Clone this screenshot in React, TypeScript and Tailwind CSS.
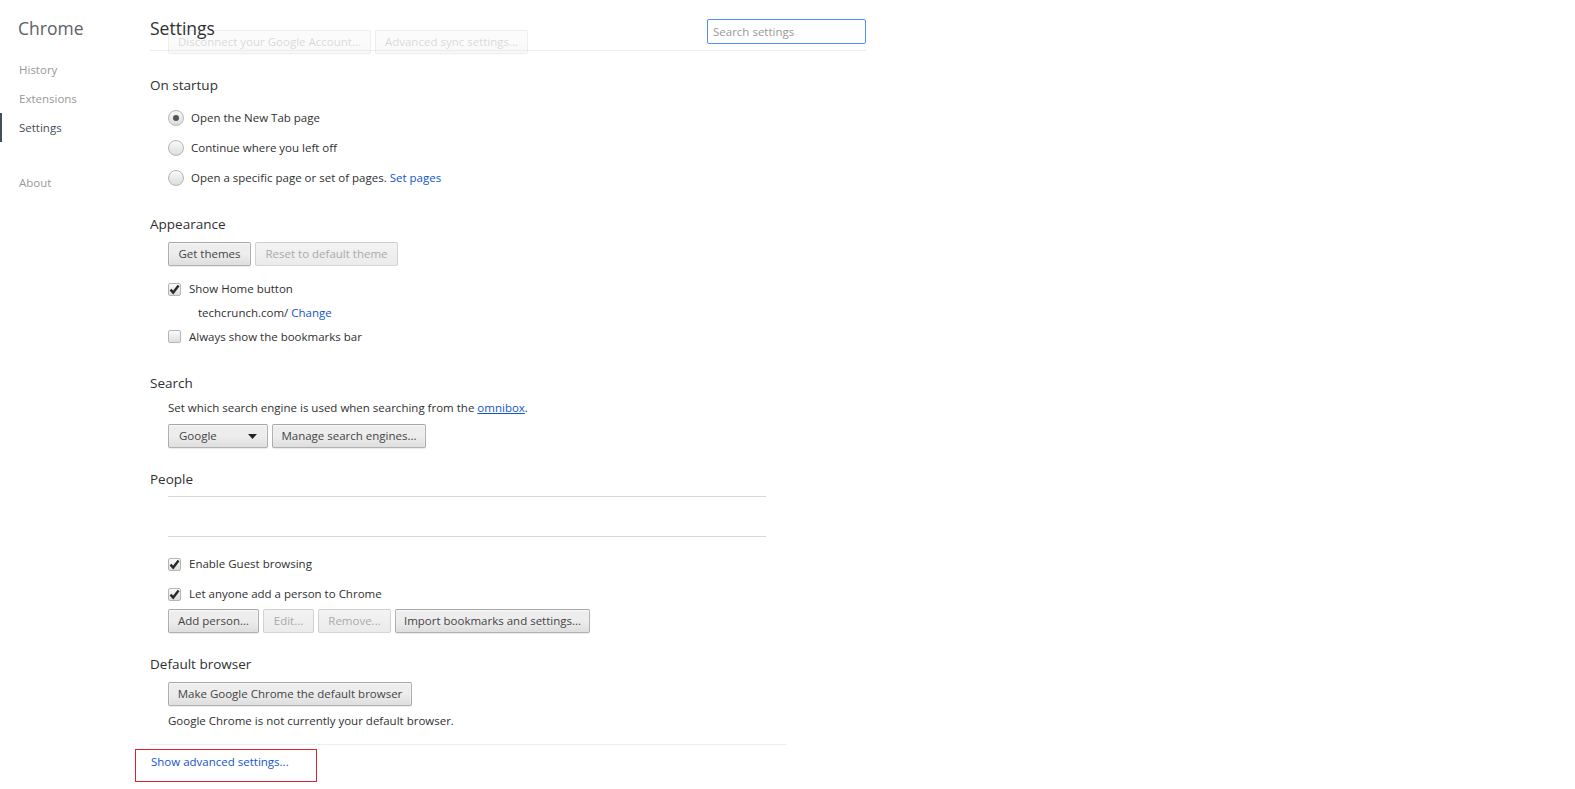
import React from "react";

const btn =
  "h-[24px] rounded-[2px] border border-[rgba(0,0,0,0.25)] bg-gradient-to-b from-[#ededed] via-[#ededed] to-[#dedede] shadow-[0_1px_0_rgba(0,0,0,0.08),inset_0_1px_2px_rgba(255,255,255,0.75)] text-[11.5px] text-[#444] text-center leading-[22px]";
const btnOff =
  "h-[24px] rounded-[2px] border border-[rgba(0,0,0,0.12)] bg-gradient-to-b from-[#f3f3f3] to-[#ebebeb] text-[11.5px] text-[#aaa] text-center leading-[22px]";

function Radio({ on }: { on?: boolean }) {
  return (
    <span className="w-[16px] h-[16px] rounded-full border border-[#b5b5b5] bg-gradient-to-b from-[#fafafa] to-[#dcdcdc] flex items-center justify-center shrink-0">
      {on && <span className="w-[6px] h-[6px] rounded-full bg-[#555]" />}
    </span>
  );
}

function Check({ on }: { on?: boolean }) {
  return (
    <span className="w-[13px] h-[13px] rounded-[2px] border border-[#b5b5b5] bg-gradient-to-b from-[#fafafa] to-[#dedede] flex items-center justify-center shrink-0">
      {on && (
        <svg width="11" height="11" viewBox="0 0 11 11">
          <path d="M1.5 5.6 L4.2 8.6 L9.6 1.6" fill="none" stroke="#2a2a2a" strokeWidth="2.4" />
        </svg>
      )}
    </span>
  );
}

function H3({ children }: { children: React.ReactNode }) {
  return <div className="h-[20px] leading-[20px] text-[13.5px] text-[#303030]">{children}</div>;
}

export default function App() {
  return (
    <div className="flex bg-white min-h-[789px] font-['Open_Sans',sans-serif] text-[11.5px] text-[#303030]">
      {/* sidebar */}
      <div className="w-[149px] shrink-0">
        <div className="pl-[18px] pt-[16px] h-[55px] text-[17.5px] text-[#5c6166] leading-[24px]">Chrome</div>
        <div className="flex flex-col text-[11.5px] text-[#999]">
          <div className="h-[29px] leading-[29px] pl-[19px]">History</div>
          <div className="h-[29px] leading-[29px] pl-[19px]">Extensions</div>
          <div className="h-[29px] leading-[29px] pl-[17px] border-l-2 border-[#464e5a] text-[#464e5a]">Settings</div>
          <div className="h-[26px]" />
          <div className="h-[29px] leading-[29px] pl-[19px]">About</div>
        </div>
      </div>

      {/* main */}
      <div className="flex flex-col pl-[1px]">
        <div className="relative w-[716px] h-[51px] border-b border-[#eee]">
          <div className="absolute left-[18px] top-[30px] flex gap-[4px] opacity-20">
            <div className={btn + " w-[203px]"}>Disconnect your Google Account...</div>
            <div className={btn + " w-[153px]"}>Advanced sync settings...</div>
          </div>
          <div className="absolute left-0 top-[16px] text-[17.5px] leading-[24px] text-[#303030]">Settings</div>
          <div className="absolute left-[557px] top-[19px] w-[159px] h-[25px] rounded-[2px] border border-[#4d90fe] pl-[5px] leading-[23px] text-[11.5px] text-[#999]">
            Search settings
          </div>
        </div>

        {/* On startup */}
        <div className="mt-[24px]">
          <H3>On startup</H3>
          <div className="mt-[8px] pl-[18px] flex flex-col">
            <div className="h-[30px] flex items-center gap-[7px]">
              <Radio on /> <span>Open the New Tab page</span>
            </div>
            <div className="h-[30px] flex items-center gap-[7px]">
              <Radio /> <span>Continue where you left off</span>
            </div>
            <div className="h-[30px] flex items-center gap-[7px]">
              <Radio />
              <span>
                Open a specific page or set of pages. <span className="text-[#15c]">Set pages</span>
              </span>
            </div>
          </div>
        </div>

        {/* Appearance */}
        <div className="mt-[21px]">
          <H3>Appearance</H3>
          <div className="mt-[8px] pl-[18px]">
            <div className="flex gap-[4px]">
              <div className={btn + " w-[83px]"}>Get themes</div>
              <div className={btnOff + " w-[143px]"}>Reset to default theme</div>
            </div>
            <div className="mt-[11px] flex flex-col">
              <div className="h-[24px] flex items-center gap-[8px]">
                <Check on /> <span>Show Home button</span>
              </div>
              <div className="h-[24px] flex items-center pl-[30px]">
                techcrunch.com/&nbsp;<span className="text-[#15c]">Change</span>
              </div>
              <div className="h-[23px] flex items-center gap-[8px]">
                <Check /> <span>Always show the bookmarks bar</span>
              </div>
            </div>
          </div>
        </div>

        {/* Search */}
        <div className="mt-[25px]">
          <H3>Search</H3>
          <div className="mt-[5px] pl-[18px]">
            <div className="h-[20px] leading-[20px]">
              Set which search engine is used when searching from the{" "}
              <span className="text-[#15c] underline">omnibox</span>.
            </div>
            <div className="mt-[6px] flex gap-[4px]">
              <div className={btn + " w-[100px] flex items-center justify-between px-[10px]"}>
                <span>Google</span>
                <svg width="9" height="5" viewBox="0 0 9 5">
                  <path d="M0 0 H9 L4.5 5 Z" fill="#222" />
                </svg>
              </div>
              <div className={btn + " w-[154px]"}>Manage search engines...</div>
            </div>
          </div>
        </div>

        {/* People */}
        <div className="mt-[21px]">
          <H3>People</H3>
          <div className="pl-[18px]">
            <div className="mt-[7px] w-[598px] h-[41px] border-y border-[#d9d9d9]" />
            <div className="mt-[15px] h-[24px] flex items-center gap-[8px]">
              <Check on /> <span>Enable Guest browsing</span>
            </div>
            <div className="mt-[6px] h-[24px] flex items-center gap-[8px]">
              <Check on /> <span>Let anyone add a person to Chrome</span>
            </div>
            <div className="mt-[3px] flex gap-[4px]">
              <div className={btn + " w-[91px]"}>Add person...</div>
              <div className={btnOff + " w-[51px]"}>Edit...</div>
              <div className={btnOff + " w-[73px]"}>Remove...</div>
              <div className={btn + " w-[195px]"}>Import bookmarks and settings...</div>
            </div>
          </div>
        </div>

        {/* Default browser */}
        <div className="mt-[21px]">
          <H3>Default browser</H3>
          <div className="mt-[8px] pl-[18px]">
            <div className={btn + " w-[244px]"}>Make Google Chrome the default browser</div>
            <div className="mt-[5px] h-[20px] leading-[20px]">Google Chrome is not currently your default browser.</div>
          </div>
        </div>

        <div className="mt-[13px] w-[636px] border-t border-[#eee]" />
        <div className="mt-[4px] ml-[-15px] w-[182px] h-[33px] border border-[#e0202a] pl-[15px] pt-[2px]">
          <span className="text-[#15c] leading-[20px]">Show advanced settings...</span>
        </div>
      </div>
    </div>
  );
}
